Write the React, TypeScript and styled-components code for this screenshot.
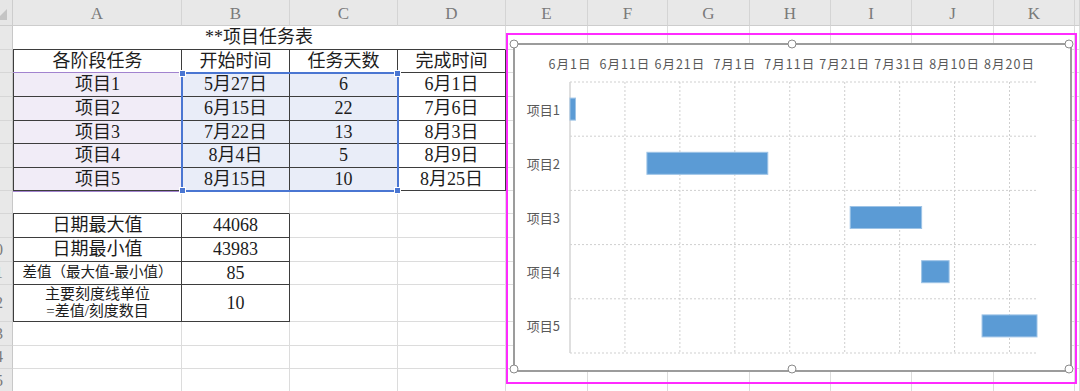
import React from "react";
import styled, { createGlobalStyle } from "styled-components";

// Excel sheet with a task table on the left and a Gantt chart (stacked bar) floating over E:K

type Line = "grid" | "dark";

interface CellSpec {
  text?: React.ReactNode;
  span?: number;
  r: Line;
  b: Line;
  l?: Line;
  fill?: string;
  size?: number;
}

const GlobalStyle = createGlobalStyle`
  html, body {
    margin: 0;
    padding: 0;
    background: #ffffff;
  }
  body {
    font-family: "Liberation Serif", "Noto Sans CJK SC", serif;
    overflow: hidden;
  }
`;

const lineColor = (l: Line) => (l === "dark" ? "#3d3d3d" : "#dcdcdc");

const COL_WIDTHS = [13, 169, 108, 108, 108, 82, 80, 82, 81, 81, 82, 81];
const ROW_HEIGHTS = [26, 24, 23, 24, 24, 23, 24, 23, 23, 24, 24, 23, 37, 24, 23, 24];
const LETTERS = ["A", "B", "C", "D", "E", "F", "G", "H", "I", "J", "K", ""];

const Sheet = styled.div`
  position: relative;
  width: 1080px;
  height: 391px;
  overflow: hidden;
  display: grid;
  grid-template-columns: ${COL_WIDTHS.map((w) => `${w}px`).join(" ")} 1fr;
  grid-template-rows: ${ROW_HEIGHTS.map((h) => `${h}px`).join(" ")};
`;

const Corner = styled.div`
  position: relative;
  box-sizing: border-box;
  background: #e6e6e6;
  border-right: 1px solid #cdcdcd;
  border-bottom: 1px solid #cdcdcd;
  overflow: hidden;

  &::after {
    content: "";
    position: absolute;
    left: -4px;
    bottom: 5px;
    width: 0;
    height: 0;
    border-left: 11px solid transparent;
    border-bottom: 11px solid #c4c4c4;
  }
`;

const ColHead = styled.div`
  box-sizing: border-box;
  background: #e8e8e8;
  border-right: 1px solid #d4d4d4;
  border-bottom: 1px solid #cdcdcd;
  display: flex;
  align-items: center;
  justify-content: center;
  padding-top: 3px;
  font-family: "Liberation Serif", serif;
  font-size: 17px;
  color: #7a7a7a;
`;

// the row header column is scrolled almost out of view: only the tail of two-digit numbers shows
const RowHead = styled.div`
  box-sizing: border-box;
  background: #e8e8e8;
  border-right: 1px solid #c8c8c8;
  border-bottom: 1px solid #d6d6d6;
  overflow: hidden;
  display: flex;
  align-items: center;
`;

const RowNum = styled.span`
  flex: none;
  width: 36px;
  margin-left: -23px;
  text-align: center;
  font-family: "Liberation Serif", serif;
  font-size: 16px;
  color: #7a7a7a;
`;

const Cell = styled.div<{
  $r: Line;
  $b: Line;
  $l?: Line;
  $fill?: string;
  $size?: number;
  $span?: number;
}>`
  box-sizing: border-box;
  grid-column: span ${(p) => p.$span ?? 1};
  border-right: 1px solid ${(p) => lineColor(p.$r)};
  border-bottom: 1px solid ${(p) => lineColor(p.$b)};
  border-left: ${(p) => (p.$l ? `1px solid ${lineColor(p.$l)}` : "none")};
  background: ${(p) => p.$fill ?? "#ffffff"};
  display: flex;
  align-items: center;
  justify-content: center;
  text-align: center;
  white-space: nowrap;
  font-size: ${(p) => p.$size ?? 18}px;
  line-height: 1.05;
  color: #1c1c1c;
`;

const TwoLines = styled.span`
  display: block;
  line-height: 17px;
`;

const RangeBox = styled.div<{ $left: number; $top: number; $w: number; $h: number }>`
  position: absolute;
  left: ${(p) => p.$left}px;
  top: ${(p) => p.$top}px;
  width: ${(p) => p.$w}px;
  height: ${(p) => p.$h}px;
  box-sizing: border-box;
  pointer-events: none;
`;

const BlueRange = styled(RangeBox)`
  border: 2px solid #4a76d2;
`;

const PurpleRange = styled(RangeBox)`
  border-top: 1.5px solid #a283cf;
  border-bottom: 1.5px solid #a283cf;
`;

const RangeGrip = styled.span<{ $x: "left" | "right"; $y: "top" | "bottom"; $color: string }>`
  position: absolute;
  ${(p) => p.$x}: -4px;
  ${(p) => p.$y}: -4px;
  width: 5px;
  height: 5px;
  background: ${(p) => p.$color};
  border: 1px solid #ffffff;
`;

const Selection = styled(RangeBox)`
  border: 2px solid #ff2bff;
`;

const ChartFrame = styled.div`
  position: absolute;
  left: 513px;
  top: 43px;
  width: 559px;
  height: 329px;
  box-sizing: border-box;
  border: 2px solid #9c9c9c;
  background: #ffffff;
`;

const ChartSvg = styled.svg`
  display: block;
  font-family: "Noto Sans CJK SC", "Noto Sans", sans-serif;
`;

const Handle = styled.span<{ $x: string; $y: string }>`
  position: absolute;
  left: calc(${(p) => p.$x} - 1px);
  top: calc(${(p) => p.$y} - 1px);
  width: 9px;
  height: 9px;
  transform: translate(-50%, -50%);
  box-sizing: border-box;
  border-radius: 50%;
  background: #ffffff;
  border: 1.5px solid #8a8a8a;
`;

const PURPLE = "#f1ecf7";
const BLUE = "#e9edf8";

const grid = (n: number): CellSpec[] => Array.from({ length: n }, () => ({ r: "grid", b: "grid" }));

const tasks = [
  ["项目1", "5月27日", "6", "6月1日"],
  ["项目2", "6月15日", "22", "7月6日"],
  ["项目3", "7月22日", "13", "8月3日"],
  ["项目4", "8月4日", "5", "8月9日"],
  ["项目5", "8月15日", "10", "8月25日"],
];

const stats: [React.ReactNode, string, number][] = [
  ["日期最大值", "44068", 18],
  ["日期最小值", "43983", 18],
  ["差值（最大值-最小值）", "85", 14.5],
  [
    <TwoLines key="u">
      主要刻度线单位
      <br />
      =差值/刻度数目
    </TwoLines>,
    "10",
    15,
  ],
];

const sheetRows: CellSpec[][] = [
  [{ text: "**项目任务表", span: 4, r: "grid", b: "dark" }, ...grid(8)],
  [
    { text: "各阶段任务", l: "dark", r: "dark", b: "dark" },
    { text: "开始时间", r: "dark", b: "dark" },
    { text: "任务天数", r: "dark", b: "dark" },
    { text: "完成时间", r: "dark", b: "dark" },
    ...grid(8),
  ],
  ...tasks.map((t): CellSpec[] => [
    { text: t[0], l: "dark", r: "dark", b: "dark", fill: PURPLE },
    { text: t[1], r: "dark", b: "dark", fill: BLUE },
    { text: t[2], r: "dark", b: "dark", fill: BLUE },
    { text: t[3], r: "dark", b: "dark" },
    ...grid(8),
  ]),
  [{ r: "grid", b: "dark" }, { r: "grid", b: "dark" }, ...grid(10)],
  ...stats.map(([label, value, size]): CellSpec[] => [
    { text: label, l: "dark", r: "dark", b: "dark", size },
    { text: value, r: "dark", b: "dark" },
    ...grid(10),
  ]),
  grid(12),
  grid(12),
  grid(12),
];

// chart geometry, relative to the inside of the chart frame (page x 515, y 45)
const PLOT = { x: 55, y: 37, w: 467, h: 271 };
const DAYS = 85;
const dayX = (d: number) => PLOT.x + (Math.max(0, d) / DAYS) * PLOT.w;
const rowH = PLOT.h / 5;

const ticks = ["6月1日", "6月11日", "6月21日", "7月1日", "7月11日", "7月21日", "7月31日", "8月10日", "8月20日"];

// start offset from 6月1日, duration in days
const bars = [
  { name: "项目1", start: -5, days: 6 },
  { name: "项目2", start: 14, days: 22 },
  { name: "项目3", start: 51, days: 13 },
  { name: "项目4", start: 64, days: 5 },
  { name: "项目5", start: 75, days: 10 },
];

const GanttChart: React.FC = () => (
  <ChartSvg width={555} height={325} viewBox="0 0 555 325">
    {ticks.map((t, i) => (
      <text
        key={t}
        x={dayX(i * 10)}
        y={18}
        fontSize={12.5}
        letterSpacing={1}
        fill="#595959"
        textAnchor="middle"
        dominantBaseline="central"
      >
        {t}
      </text>
    ))}
    {ticks.slice(1).map((t, i) => (
      <line
        key={`v${t}`}
        x1={dayX((i + 1) * 10)}
        x2={dayX((i + 1) * 10)}
        y1={PLOT.y}
        y2={PLOT.y + PLOT.h}
        stroke="#cfcfcf"
        strokeDasharray="2 2"
      />
    ))}
    {[0, 1, 2, 3, 4, 5].map((i) => (
      <line
        key={`h${i}`}
        x1={PLOT.x}
        x2={PLOT.x + PLOT.w}
        y1={PLOT.y + i * rowH}
        y2={PLOT.y + i * rowH}
        stroke="#cfcfcf"
        strokeDasharray="2 2"
      />
    ))}
    <line x1={PLOT.x} x2={PLOT.x} y1={PLOT.y} y2={PLOT.y + PLOT.h} stroke="#d4d4d4" strokeWidth={1.5} />
    {bars.map((b, i) => {
      const cy = PLOT.y + rowH * (i + 0.5);
      const x1 = dayX(b.start);
      const x2 = dayX(b.start + b.days);
      return (
        <g key={b.name}>
          <text x={45} y={cy} fontSize={13} fill="#595959" textAnchor="end" dominantBaseline="central">
            {b.name}
          </text>
          <rect x={x1} y={cy - 11} width={x2 - x1} height={22} fill="#5b9bd5" stroke="#9dc3e6" strokeWidth={1} />
        </g>
      );
    })}
  </ChartSvg>
);

const handles: [string, string][] = [
  ["0%", "0%"],
  ["50%", "0%"],
  ["100%", "0%"],
  ["0%", "100%"],
  ["50%", "100%"],
  ["100%", "100%"],
];

const App: React.FC = () => (
  <>
    <GlobalStyle />
    <Sheet>
      <Corner />
      {LETTERS.map((l, i) => (
        <ColHead key={`c${i}`}>{l}</ColHead>
      ))}
      {sheetRows.map((row, r) => (
        <React.Fragment key={`r${r}`}>
          {/* single-digit row numbers sit fully left of the visible strip */}
          <RowHead>{r + 1 >= 10 && <RowNum>{r + 1}</RowNum>}</RowHead>
          {row.map((c, i) => (
            <Cell key={i} $r={c.r} $b={c.b} $l={c.l} $fill={c.fill} $size={c.size} $span={c.span}>
              {c.text}
            </Cell>
          ))}
        </React.Fragment>
      ))}

      <PurpleRange $left={13} $top={72} $w={169} $h={120} />
      <BlueRange $left={181} $top={72} $w={218} $h={120}>
        <RangeGrip $x="left" $y="top" $color="#4a76d2" />
        <RangeGrip $x="right" $y="top" $color="#4a76d2" />
        <RangeGrip $x="left" $y="bottom" $color="#4a76d2" />
        <RangeGrip $x="right" $y="bottom" $color="#4a76d2" />
      </BlueRange>

      <Selection $left={506} $top={33} $w={571} $h={351} />
      <ChartFrame>
        <GanttChart />
        {handles.map(([x, y]) => (
          <Handle key={`${x}${y}`} $x={x} $y={y} />
        ))}
      </ChartFrame>
    </Sheet>
  </>
);

export default App;
